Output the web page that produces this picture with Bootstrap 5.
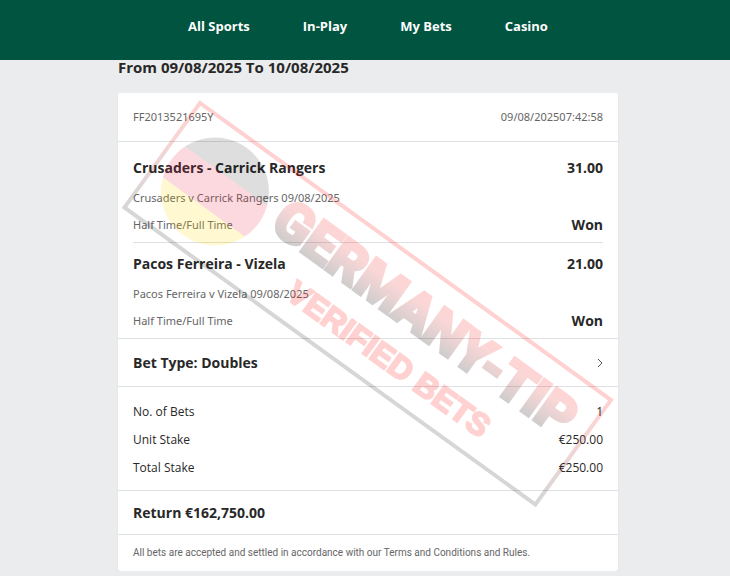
<!DOCTYPE html>
<html lang="en">
<head>
<meta charset="utf-8">
<meta name="viewport" content="width=device-width, initial-scale=1">
<title>My Bets</title>
<link href="https://cdn.jsdelivr.net/npm/bootstrap@5.3.0/dist/css/bootstrap.min.css" rel="stylesheet">
<style>
  body { background: #ebeced; color: #282828; font-family: "Open Sans", "Noto Sans", sans-serif; font-size: 12px; line-height: 20px; }
  .top-bar { background: #005440; min-height: 60px; padding: 0 0 8px 6px; }
  .top-links { gap: 53px; }
  .top-links a { color: #fff; font-size: 13px; font-weight: 700; }
  .page-body { padding-left: 6px; }
  .slip-wrap { max-width: 500px; }
  .heading { font-size: 14px; line-height: 24px; font-weight: 700; }
  .range { font-size: 15px; line-height: 14px; padding-bottom: 19px; }
  .slip { border-radius: 2px; box-shadow: 0 1px 1px #c8caca; }
  .slip section, .slip header { border-bottom: 1px solid #dfe0e1; }
  .pad { padding-left: 15px; padding-right: 15px; }
  .ref-row { min-height: 49px; }
  .muted { color: #666; font-family: "Noto Sans", sans-serif; font-size: 11px; }
  .legs { padding-top: 5px; }
  .leg { padding: 9px 0 5px; }
  .leg + .leg { border-top: 1px solid #dfe0e1; }
  .leg .event { margin-top: 8px; margin-bottom: 5px; }
  .type-btn { min-height: 47px; background: none; color: inherit; }
  .totals { padding-top: 11px; padding-bottom: 8px; }
  .totals div { line-height: 28px; }
  .return-row { min-height: 44px; }
  .terms { font-family: Roboto, sans-serif; font-size: 10px; min-height: 36px; }
  .stamp { font-weight: 700; }
  .stamp-name { font-family: Roboto, sans-serif; font-size: 54px; font-weight: 700; }
  .stamp-sub { font-family: "Liberation Sans", Arial, sans-serif; font-size: 32px; }
</style>
<script src="https://cdn.jsdelivr.net/npm/bootstrap@5.3.0/dist/js/bootstrap.bundle.min.js"></script>
</head>
<body>
<nav class="top-bar d-flex justify-content-center align-items-center" aria-label="Main">
  <div class="top-links d-flex">
    <a class="text-decoration-none" href="#">All Sports</a>
    <a class="text-decoration-none" href="#">In-Play</a>
    <a class="text-decoration-none" href="#">My Bets</a>
    <a class="text-decoration-none" href="#">Casino</a>
  </div>
</nav>
<main class="page-body">
  <div class="slip-wrap mx-auto">
    <h1 class="heading range m-0">From 09/08/2025 To 10/08/2025</h1>
    <article class="slip bg-white position-relative">
      <header class="ref-row pad muted d-flex justify-content-between align-items-center">
        <span>FF2013521695Y</span>
        <span class="d-flex"><span>09/08/2025</span><span>07:42:58</span></span>
      </header>
      <section class="legs pad">
        <div class="leg">
          <div class="heading d-flex justify-content-between"><span>Crusaders - Carrick Rangers</span><span>31.00</span></div>
          <div class="event muted">Crusaders v Carrick Rangers 09/08/2025</div>
          <div class="d-flex justify-content-between align-items-center"><span class="muted">Half Time/Full Time</span><span class="heading">Won</span></div>
        </div>
        <div class="leg">
          <div class="heading d-flex justify-content-between"><span>Pacos Ferreira - Vizela</span><span>21.00</span></div>
          <div class="event muted">Pacos Ferreira v Vizela 09/08/2025</div>
          <div class="d-flex justify-content-between align-items-center"><span class="muted">Half Time/Full Time</span><span class="heading">Won</span></div>
        </div>
      </section>
      <section>
        <button type="button" class="type-btn heading pad border-0 w-100 d-flex justify-content-between align-items-center">
          <span>Bet Type: Doubles</span>
          <svg width="6" height="10" viewBox="0 0 6 10" fill="none" stroke="#555" aria-hidden="true"><path d="M1 1l4 4-4 4"/></svg>
        </button>
      </section>
      <section class="totals pad">
        <div class="d-flex justify-content-between"><span>No. of Bets</span><span>1</span></div>
        <div class="d-flex justify-content-between"><span>Unit Stake</span><span>€250.00</span></div>
        <div class="d-flex justify-content-between"><span>Total Stake</span><span>€250.00</span></div>
      </section>
      <section class="return-row heading pad d-flex align-items-center"><span>Return €162,750.00</span></section>
      <div class="muted terms pad d-flex align-items-center">All bets are accepted and settled in accordance with our Terms and Conditions and Rules.</div>

      <svg class="stamp position-absolute top-0 start-0 w-100 h-100 pe-none" viewBox="0 0 500 478" role="img" aria-label="Germany-Tip verified bets">
        <defs>
          <linearGradient id="edge" gradientUnits="userSpaceOnUse" x1="0" y1="0" x2="0" y2="129">
            <stop offset="0" stop-color="#f00" stop-opacity=".18"/>
            <stop offset=".35" stop-color="#d01818" stop-opacity=".18"/>
            <stop offset="1" stop-color="#000" stop-opacity=".16"/>
          </linearGradient>
          <linearGradient id="letters" gradientUnits="userSpaceOnUse" x1="0" y1="20" x2="0" y2="64">
            <stop offset="0" stop-color="#f00" stop-opacity=".17"/>
            <stop offset=".3" stop-color="#e01010" stop-opacity=".17"/>
            <stop offset="1" stop-color="#000" stop-opacity=".2"/>
          </linearGradient>
          <clipPath id="ball"><circle cx="64" cy="63" r="54"/></clipPath>
          <mask id="solid-name" maskUnits="userSpaceOnUse" x="0" y="0" width="507" height="129">
            <text class="stamp-name" x="129" y="61" fill="#fff" stroke="#fff" stroke-width="4">GERMANY-TIP</text>
          </mask>
          <mask id="solid-sub" maskUnits="userSpaceOnUse" x="0" y="0" width="507" height="129">
            <text class="stamp-sub" x="182" y="108" fill="#fff" stroke="#fff" stroke-width="2">VERIFIED BETS</text>
          </mask>
        </defs>
        <g transform="translate(82 10) rotate(35.85)">
          <rect width="507" height="129" fill="none" stroke="url(#edge)" stroke-width="4"/>
          <g clip-path="url(#ball)">
            <rect x="9" y="8" width="110" height="36" fill="#000" fill-opacity=".13"/>
            <rect x="9" y="44" width="110" height="38" fill="#f02040" fill-opacity=".17"/>
            <rect x="9" y="82" width="110" height="36" fill="#ffd800" fill-opacity=".18"/>
          </g>
          <rect x="120" y="10" width="386" height="62" fill="url(#letters)" mask="url(#solid-name)"/>
          <rect x="170" y="76" width="290" height="44" fill="#f00" fill-opacity=".18" mask="url(#solid-sub)"/>
        </g>
      </svg>
    </article>
  </div>
</main>
</body>
</html>
